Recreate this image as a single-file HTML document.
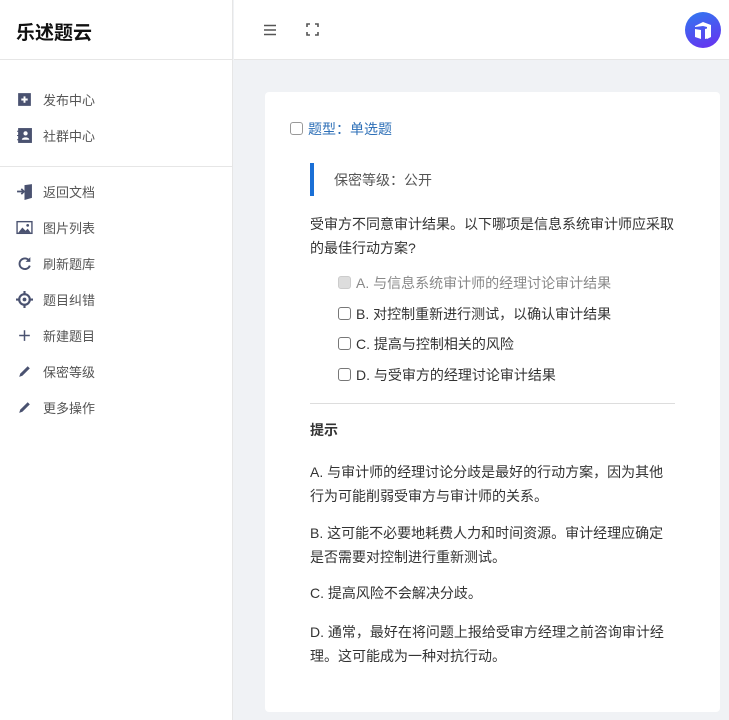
<!DOCTYPE html>
<html><head><meta charset="utf-8"><style>
*{margin:0;padding:0;box-sizing:border-box}
body{width:729px;height:720px;overflow:hidden;font-family:"Liberation Sans","Noto Sans CJK SC",sans-serif;background:#f0f2f5;position:relative;color:#333}
.side{position:absolute;left:0;top:0;width:233px;height:720px;background:#fff;border-right:1px solid #e6e6e6}
.logo{height:60px;border-bottom:1px solid #e6e6e6;font-size:19px;font-weight:bold;color:#111;padding:18px 0 0 16px}
.top{position:absolute;left:234px;top:0;right:0;height:60px;background:#fff;border-bottom:1px solid #e6e6e6}
.item{position:absolute;left:16px;font-size:13px;color:#555;display:flex;align-items:center}
.item svg{width:17px;height:17px;margin-right:10px}
.hr{position:absolute;left:0;width:233px;border-top:1px solid #e6e6e6}
.card{position:absolute;left:265px;top:92px;width:455px;height:620px;background:#fff;border-radius:4px}
.t{position:absolute;font-size:14px;color:#333;line-height:24px}
.cb{display:inline-block;width:13px;height:13px;border:1px solid #777;border-radius:3px;vertical-align:-1px;margin-right:5px;background:#fff}
</style></head><body>
<div class="side">
<div class="logo">乐述题云</div>
<div class="item" style="top:90px"><svg viewBox="0 0 16 16"><rect x="2" y="2" width="12" height="12" fill="#4a5270"/><path d="M8 5v6M5 8h6" stroke="#fff" stroke-width="1.8"/></svg>发布中心</div>
<div class="item" style="top:126px"><svg viewBox="0 0 16 16"><rect x="2" y="1" width="13" height="14" fill="#4a5270"/><circle cx="9" cy="6" r="2" fill="#fff"/><path d="M5.5 12c0-3 7-3 7 0z" fill="#fff"/><path d="M1 4h2M1 8h2M1 12h2" stroke="#4a5270"/></svg>社群中心</div>
<div class="hr" style="top:166px"></div>
<div class="item" style="top:182px"><svg viewBox="0 0 16 16"><path d="M8 2l7-1v13l-7 2z" fill="#4a5270"/><path d="M1 8h6M5 5.5l2.5 2.5L5 10.5" stroke="#4a5270" stroke-width="1.6" fill="none"/></svg>返回文档</div>
<div class="item" style="top:218px"><svg viewBox="0 0 16 16"><rect x="1" y="2.5" width="14" height="11" fill="none" stroke="#4a5270" stroke-width="1.3"/><path d="M2 13l4-5 3 3 2-2 3 4z" fill="#4a5270"/><circle cx="11" cy="6" r="1.3" fill="#4a5270"/></svg>图片列表</div>
<div class="item" style="top:254px"><svg viewBox="0 0 16 16"><path d="M12.5 5.5A5 5 0 1 0 13 10" stroke="#4a5270" stroke-width="1.8" fill="none"/><path d="M13.5 2v4.5H9z" fill="#4a5270"/></svg>刷新题库</div>
<div class="item" style="top:290px"><svg viewBox="0 0 16 16"><circle cx="8" cy="8" r="5" stroke="#4a5270" stroke-width="2" fill="none"/><circle cx="8" cy="8" r="1.8" fill="#4a5270"/><path d="M8 0v4M8 12v4M0 8h4M12 8h4" stroke="#4a5270" stroke-width="2"/></svg>题目纠错</div>
<div class="item" style="top:326px"><svg viewBox="0 0 16 16"><path d="M8 3v10M3 8h10" stroke="#4a5270" stroke-width="1.4"/></svg>新建题目</div>
<div class="item" style="top:362px"><svg viewBox="0 0 16 16"><path d="M3 13l1-3 7-7 2 2-7 7z" fill="#4a5270"/></svg>保密等级</div>
<div class="item" style="top:398px"><svg viewBox="0 0 16 16"><path d="M3 13l1-3 7-7 2 2-7 7z" fill="#4a5270"/></svg>更多操作</div>
</div>
<div class="top">
<svg style="position:absolute;left:29px;top:23px" width="14" height="14" viewBox="0 0 14 14"><path d="M1 2.5h12M1 7h12M1 11.5h12" stroke="#555" stroke-width="1.5"/></svg>
<svg style="position:absolute;left:72px;top:23px" width="13" height="13" viewBox="0 0 13 13"><path d="M1 4V1h3M9 1h3v3M12 9v3H9M4 12H1V9" stroke="#555" stroke-width="1.6" fill="none"/></svg>
<div style="position:absolute;left:451px;top:12px;width:36px;height:36px;border-radius:50%;background:linear-gradient(160deg,#2f7af0,#6a2ef0)"><svg width="36" height="36" viewBox="0 0 36 36"><path d="M10 14l8-4 8 3v12l-4 2V15l-4-1-8 1z M10 17l6 1v9l-6-2z M20 17l4-1v10l-4 1z" fill="#fff"/></svg></div>
</div>
<div class="card"></div>
<div class="t" style="left:290px;top:117px;color:#2d6fb7"><span class="cb" style="border-color:#999"></span>题型：单选题</div>
<div style="position:absolute;left:310px;top:163px;width:4px;height:33px;background:#1a6fd6"></div>
<div class="t" style="left:334px;top:168px;color:#555">保密等级：公开</div>
<div class="t" style="left:310px;top:212px;width:370px">受审方不同意审计结果。以下哪项是信息系统审计师应采取的最佳行动方案?</div>
<div class="t" style="left:338px;top:271px;color:#888"><span class="cb" style="background:#ddd;border-color:#ccc"></span>A. 与信息系统审计师的经理讨论审计结果</div>
<div class="t" style="left:338px;top:302px"><span class="cb"></span>B. 对控制重新进行测试，以确认审计结果</div>
<div class="t" style="left:338px;top:332px"><span class="cb"></span>C. 提高与控制相关的风险</div>
<div class="t" style="left:338px;top:363px"><span class="cb"></span>D. 与受审方的经理讨论审计结果</div>
<div style="position:absolute;left:310px;top:403px;width:365px;border-top:1px solid #ddd"></div>
<div class="t" style="left:310px;top:418px;font-weight:bold">提示</div>
<div class="t" style="left:310px;top:460px;width:365px">A. 与审计师的经理讨论分歧是最好的行动方案，因为其他行为可能削弱受审方与审计师的关系。</div>
<div class="t" style="left:310px;top:521px;width:365px">B. 这可能不必要地耗费人力和时间资源。审计经理应确定是否需要对控制进行重新测试。</div>
<div class="t" style="left:310px;top:581px">C. 提高风险不会解决分歧。</div>
<div class="t" style="left:310px;top:620px;width:365px">D. 通常，最好在将问题上报给受审方经理之前咨询审计经理。这可能成为一种对抗行动。</div>
</body></html>
